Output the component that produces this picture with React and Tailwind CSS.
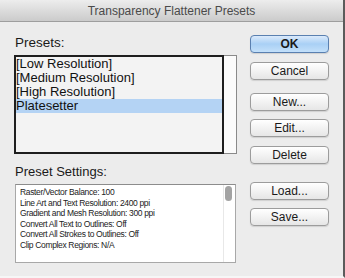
import React from 'react';

const presets = ['[Low Resolution]', '[Medium Resolution]', '[High Resolution]', 'Platesetter'];

const settings = [
    'Raster/Vector Balance: 100',
    'Line Art and Text Resolution: 2400 ppi',
    'Gradient and Mesh Resolution: 300 ppi',
    'Convert All Text to Outlines: Off',
    'Convert All Strokes to Outlines: Off',
    'Clip Complex Regions: N/A',
];

function Button({ children, primary, className = '' }) {
    return (
        <button
            className={
                'w-[79px] h-[18px] rounded-[4px] border text-[12px] leading-[16px] text-[#1a1a1a] shadow-[0_1px_1px_rgba(0,0,0,0.12)] ' +
                (primary
                    ? 'border-[#5a80b0] bg-gradient-to-b from-[#dbeafb] via-[#a9d0f5] to-[#c3e0fa] font-bold '
                    : 'border-[#9c9c9c] bg-gradient-to-b from-[#ffffff] to-[#e6e6e6] ') +
                className
            }
        >
            {children}
        </button>
    );
}

export default function App() {
    return (
        <div className="w-[345px] h-[278px] bg-[#ececec] flex flex-col border-r-2 border-r-[#5b5b5b] border-b-2 border-b-[#f6f6f6] font-['Liberation_Sans',Arial,sans-serif] overflow-hidden">
            {/* Title bar */}
            <div className="h-[22px] shrink-0 bg-gradient-to-b from-[#ededed] to-[#cbcbcb] border-b border-[#9e9e9e] flex items-center justify-center text-[12px] text-[#4a4a4a]">
                Transparency Flattener Presets
            </div>

            <div className="flex flex-1">
                {/* Left column */}
                <div className="w-[237px] shrink-0 pl-[14px] flex flex-col">
                    <div className="mt-[12px] h-[17px] pl-[1px] text-[13.5px] leading-[17px] text-[#1a1a1a]">Presets:</div>

                    <div className="mt-[4px] h-[99px] flex">
                        <div className="flex-1 border-2 border-[#1e1e1e] bg-[#f3f3f3]">
                            {presets.map((p, i) => (
                                <div
                                    key={p}
                                    className={
                                        'h-[14px] leading-[14px] text-[13px] text-[#111] ' +
                                        (i === 3 ? 'bg-[#b4d3f4]' : '')
                                    }
                                >
                                    {p}
                                </div>
                            ))}
                        </div>
                        <div className="w-[13px] border border-l-0 border-[#8a8a8a] bg-[#fbfbfb]" />
                    </div>

                    <div className="mt-[9px] h-[17px] pl-[1px] text-[13px] leading-[17px] text-[#1a1a1a]">Preset Settings:</div>

                    <div className="mt-[4px] ml-[1px] w-[221px] h-[79px] flex border border-[#a8a8a8] border-t-[#8c8c8c] bg-white">
                        <div className="flex-1 pl-[4px] pt-[2px]">
                            {settings.map(s => (
                                <div key={s} className="h-[10.5px] leading-[10.5px] text-[8.5px] tracking-[-0.35px] text-[#222] whitespace-nowrap">
                                    {s}
                                </div>
                            ))}
                        </div>
                        <div className="w-[12px] border-l border-[#e8e8e8] pl-[1px] pt-[1px]">
                            <div className="w-[7px] h-[15px] rounded-full bg-[#a3a3a3]" />
                        </div>
                    </div>
                </div>

                {/* Right column buttons */}
                <div className="pl-[13px] flex flex-col">
                    <Button primary className="mt-[13px]">OK</Button>
                    <Button className="mt-[9px]">Cancel</Button>
                    <Button className="mt-[13px]">New...</Button>
                    <Button className="mt-[8px]">Edit...</Button>
                    <Button className="mt-[9px]">Delete</Button>
                    <Button className="mt-[18px]">Load...</Button>
                    <Button className="mt-[8px]">Save...</Button>
                </div>
            </div>
        </div>
    );
}
